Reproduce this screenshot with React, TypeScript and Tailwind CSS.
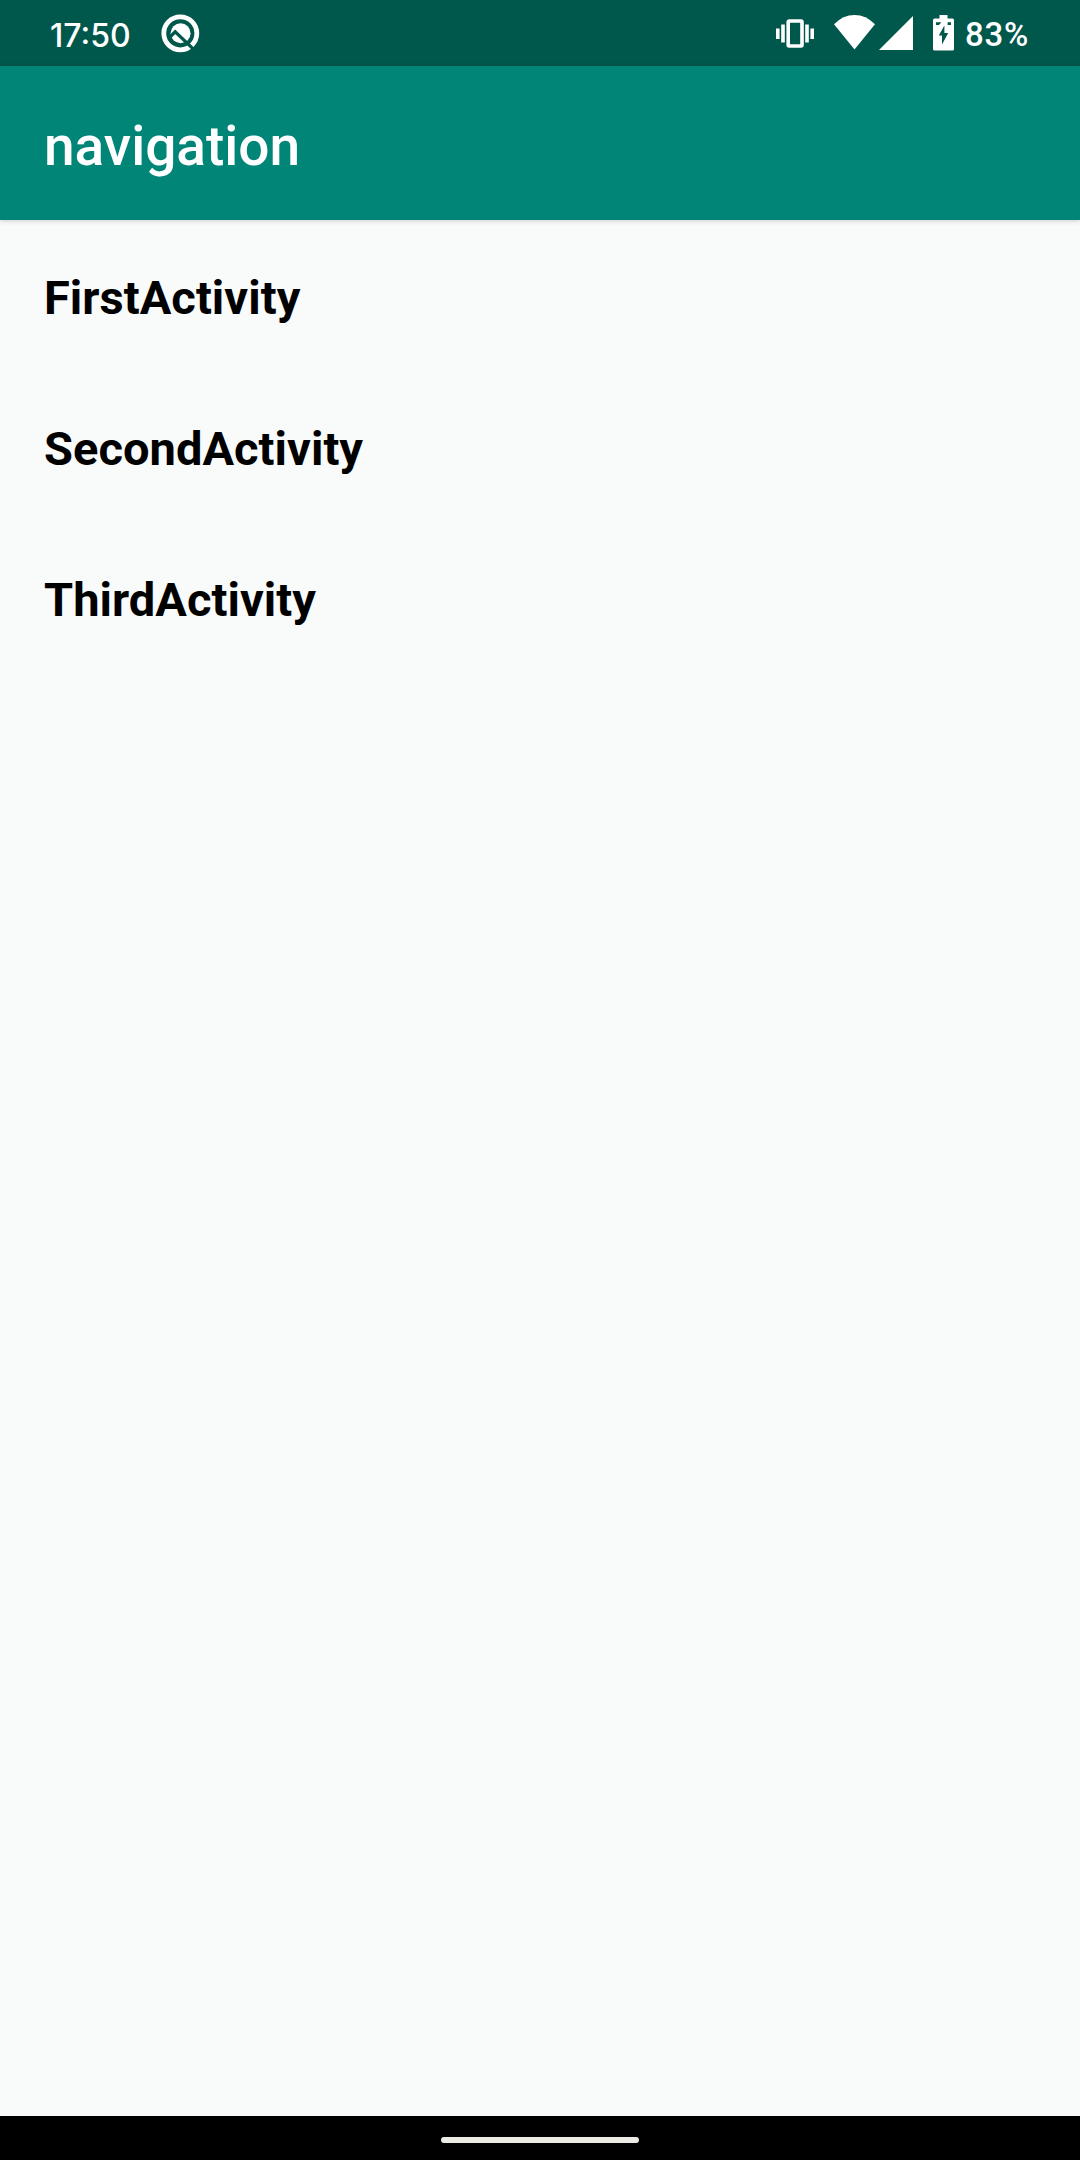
const activities = ["FirstActivity", "SecondActivity", "ThirdActivity"];

function QIcon() {
  return (
    <svg width="40" height="40" viewBox="0 0 40 40" fill="none">
      <circle cx="20.3" cy="20.3" r="16.5" stroke="white" strokeWidth="4.8" />
      <circle cx="20.6" cy="20.3" r="10" fill="white" />
      <path d="M9.5 24.5L15.2 18.8L35 37.6" stroke="#00574b" strokeWidth="3.2" />
    </svg>
  );
}

function VibrateIcon() {
  return (
    <svg width="38" height="29" viewBox="0 0 38 29" fill="white">
      <rect x="0" y="9.5" width="3.6" height="10.5" />
      <rect x="5.2" y="5.5" width="3.6" height="18" />
      <rect x="12.2" y="2" width="13.8" height="25" rx="1" fill="none" stroke="white" strokeWidth="3.6" />
      <rect x="29.2" y="5.5" width="3.6" height="18" />
      <rect x="34.4" y="9.5" width="3.6" height="10.5" />
    </svg>
  );
}

function WifiIcon() {
  return (
    <svg width="41" height="35" viewBox="0 0 41 35" fill="white">
      <path d="M0 9.3Q9 0 20.5 0Q32 0 41 9.3L20.5 34.5Z" />
    </svg>
  );
}

function SignalIcon() {
  return (
    <svg width="34" height="34" viewBox="0 0 34 34" fill="white">
      <path d="M34 0V34H0Z" />
    </svg>
  );
}

function BatteryIcon() {
  return (
    <svg width="21" height="36" viewBox="0 0 21 36" fill="white">
      <path d="M6.5 0H14.5V3.5H19.5Q21 3.5 21 5V34Q21 35.5 19.5 35.5H1.5Q0 35.5 0 34V5Q0 3.5 1.5 3.5H6.5Z" />
      <path d="M3 7.2H8.4L6 10H3ZM14.6 7.2H18V10H14.6Z" fill="#00574b" />
      <path d="M11.4 10.5V18H15.2L9 29.5V20.5H5.8Z" fill="#00574b" />
    </svg>
  );
}

export default function App() {
  return (
    <div className="flex h-[2160px] w-[1080px] flex-col bg-[#f9fafa] font-['Roboto',sans-serif]">
      <header className="flex h-[66px] shrink-0 items-start justify-between bg-[#00574b] pl-[50px] pr-[51px] text-white">
        <div className="flex pt-[13px]">
          <time className="w-[110px] pt-[3px] font-['Inter',sans-serif] text-[32px] font-medium leading-[40px]">17:50</time>
          <QIcon />
        </div>
        <div className="flex items-start pt-[15px]">
          <div className="mr-5 pt-[4px]"><VibrateIcon /></div>
          <div className="mr-1"><WifiIcon /></div>
          <div className="mr-5 pt-px"><SignalIcon /></div>
          <BatteryIcon />
          <span className="ml-[11px] w-[64px] whitespace-nowrap text-[33px] font-medium leading-[40px] tracking-[0.8px]">83%</span>
        </div>
      </header>
      <div className="relative flex h-[154px] shrink-0 items-center bg-[#008577] px-11 pt-[6px] shadow-[0_1px_5px_rgba(0,0,0,0.18)]">
        <h1 className="text-[55px] font-medium leading-[64px] text-white">navigation</h1>
      </div>
      <main className="flex flex-1 flex-col pt-[2px]">
        {activities.map((name) => (
          <div key={name} className="flex h-[151px] items-center px-11 text-[47px] font-bold leading-[56px] tracking-[0.05px] text-black">
            {name}
          </div>
        ))}
      </main>
      <nav className="flex h-11 shrink-0 justify-center bg-black pt-[21px]">
        <div className="h-[6px] w-[198px] rounded-full bg-[#ebebe4]" />
      </nav>
    </div>
  );
}
